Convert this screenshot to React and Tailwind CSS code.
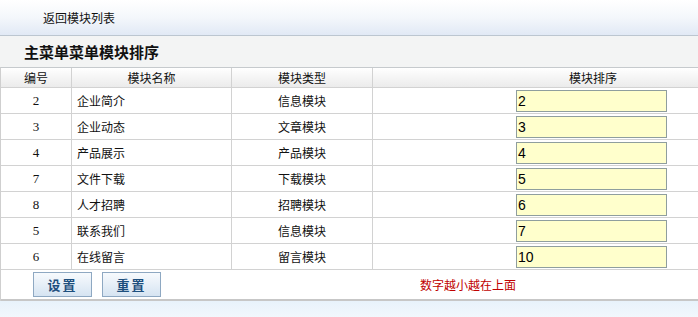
import React from 'react';

const rows = [
  { id: 2, name: '企业简介', type: '信息模块', order: '2' },
  { id: 3, name: '企业动态', type: '文章模块', order: '3' },
  { id: 4, name: '产品展示', type: '产品模块', order: '4' },
  { id: 7, name: '文件下载', type: '下载模块', order: '5' },
  { id: 8, name: '人才招聘', type: '招聘模块', order: '6' },
  { id: 5, name: '联系我们', type: '信息模块', order: '7' },
  { id: 6, name: '在线留言', type: '留言模块', order: '10' },
];

const cjk = "font-['Noto_Sans_CJK_SC',sans-serif]";

const Button = ({ children }) => (
  <button className="w-[59px] h-[25px] border border-[#8ea8c2] bg-gradient-to-b from-[#f7fafd] to-[#d6e4f2] text-[13px] font-bold text-[#1d4f7e] tracking-[2px] flex items-center justify-center leading-none">
    {children}
  </button>
);

export default function App() {
  return (
    <div className={`w-[698px] h-[317px] overflow-hidden bg-white text-[12px] text-[#111] ${cjk}`}>
      {/* top bar */}
      <div className="h-[36px] border-b border-[#bcc6d0] bg-gradient-to-b from-white via-[#f4f7fb] to-[#e1e9f5] pl-[43px] flex items-center">
        <span className="leading-none">返回模块列表</span>
      </div>

      {/* title */}
      <div className="h-[31px] bg-[#f3f4f4] pl-[24px] flex items-center">
        <h2 className="text-[15px] font-bold leading-none">主菜单菜单模块排序</h2>
      </div>

      {/* table */}
      <div className="border-l border-t border-l-[#cfcfcf] border-t-[#c6cacd]">
        <div className="h-[20px] flex border-b border-[#d2d2d2] bg-gradient-to-b from-white to-[#ebebeb]">
          <div className="w-[71px] border-r border-[#d2d2d2] flex items-center justify-center">编号</div>
          <div className="w-[160px] border-r border-[#d2d2d2] flex items-center justify-center">模块名称</div>
          <div className="w-[141px] border-r border-[#d2d2d2] flex items-center justify-center">模块类型</div>
          <div className="flex-1 flex items-center pl-[196px]">模块排序</div>
        </div>

        {rows.map((r) => (
          <div key={r.id} className="h-[26px] flex border-b border-[#d2d2d2]">
            <div className="w-[71px] border-r border-[#d2d2d2] flex items-center justify-center font-['Liberation_Serif',serif] text-[13px]">
              {r.id}
            </div>
            <div className="w-[160px] border-r border-[#d2d2d2] flex items-center pl-[5px]">{r.name}</div>
            <div className="w-[141px] border-r border-[#d2d2d2] flex items-center justify-center">{r.type}</div>
            <div className="flex-1 flex items-center pl-[143px]">
              <input
                defaultValue={r.order}
                className="w-[151px] h-[22px] border border-[#8f9e9e] bg-[#ffffcc] pl-[1px] font-['Liberation_Sans',sans-serif] text-[14px] text-black outline-none"
              />
            </div>
          </div>
        ))}

        <div className="h-[31px] flex items-center border-b-2 border-[#c7c7c7]">
          <div className="ml-[32px] flex gap-[10px]">
            <Button>设置</Button>
            <Button>重置</Button>
          </div>
          <span className="ml-[259px] text-[#c00000]">数字越小越在上面</span>
        </div>
      </div>

      {/* bottom strip */}
      <div className="h-[20px] bg-gradient-to-b from-[#e8f2fb] to-[#f4f9fd]" />
    </div>
  );
}
